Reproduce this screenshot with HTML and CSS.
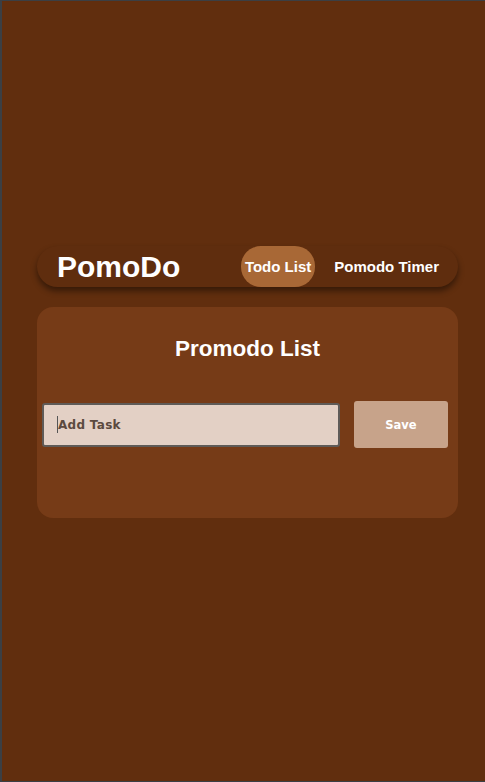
FILE: index.html
```html
<!DOCTYPE html>
<html>
<head>
<meta charset="utf-8">
<link rel="stylesheet" href="styles.css">
</head>
<body>
<div class="page">
  <div class="wrap">
    <nav class="nav">
      <div class="brand">PomoDo</div>
      <div class="links">
        <span class="link active">Todo List</span>
        <span class="link">Pomodo Timer</span>
      </div>
    </nav>
    <section class="card">
      <h1 class="title">Promodo List</h1>
      <div class="row">
        <div class="input"><span class="caret"></span><span class="ph">Add Task</span></div>
        <button class="save">Save</button>
      </div>
    </section>
  </div>
</div>
</body>
</html>
```
FILE: styles.css
```css
html, body { margin: 0; padding: 0; }
body { background: #3b3f44; }
.page {
  box-sizing: border-box;
  margin: 1px 0 0 2px;
  height: 780px;
  width: 483px;
  background: #612e0e;
  padding: 245px 27px 0 35px;
  font-family: "Liberation Sans", Arial, sans-serif;
}
.wrap { display: flex; flex-direction: column; gap: 20px; }
.nav {
  height: 41px;
  background: #5f2d0e;
  border-radius: 21px;
  box-shadow: 0 4px 6px rgba(0,0,0,0.45);
  display: flex;
  align-items: center;
  justify-content: space-between;
  padding: 0 15px 0 20px;
}
.brand { color: #fff; font-weight: bold; font-size: 30px; }
.links { display: flex; align-items: center; gap: 15px; height: 100%; }
.link {
  color: #fff; font-weight: bold; font-size: 15px;
  height: 100%; display: flex; align-items: center;
  padding: 0 4px; border-radius: 20px;
}
.link.active { background: #a86836; }
.card {
  background: #763b17;
  border-radius: 16px;
  height: 211px;
  box-sizing: border-box;
  padding: 28px 10px 0 5px;
}
.title {
  margin: 0; text-align: center; color: #fff;
  font-size: 22.5px; font-weight: bold; line-height: 28px;
  padding-left: 5px;
}
.row { display: flex; align-items: center; gap: 14px; margin-top: 38px; }
.input {
  box-sizing: border-box;
  width: 298px; height: 44px;
  background: #e3d0c5;
  border: 2px solid #5f5b58;
  border-radius: 3px;
  display: flex; align-items: center;
  padding-left: 13px;
}
.caret { width: 1px; height: 17px; background: #555; }
.ph { color: #5b4a40; font-family: "DejaVu Sans", sans-serif; font-weight: bold; font-size: 12px; letter-spacing: 0.3px; }
.save {
  width: 94px; height: 47px;
  background: #c7a38a; border: none; border-radius: 3px;
  color: #fff; font-family: "DejaVu Sans", sans-serif; font-weight: bold; font-size: 11.5px;
}
```
